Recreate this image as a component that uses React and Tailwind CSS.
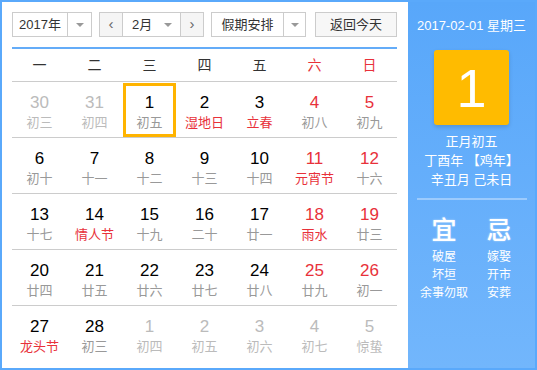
const FONT = "font-['Liberation_Sans','Noto_Sans_CJK_SC',sans-serif]";

const WEEK = ["一", "二", "三", "四", "五", "六", "日"];

// t: 0 normal, 1 dim (other month); red: number red; lr: lunar red; sel: selected
const DAYS = [
  [30, "初三", 1], [31, "初四", 1], [1, "初五", 0, 0, 0, 1], [2, "湿地日", 0, 0, 1], [3, "立春", 0, 0, 1], [4, "初八", 0, 1], [5, "初九", 0, 1],
  [6, "初十"], [7, "十一"], [8, "十二"], [9, "十三"], [10, "十四"], [11, "元宵节", 0, 1, 1], [12, "十六", 0, 1],
  [13, "十七"], [14, "情人节", 0, 0, 1], [15, "十九"], [16, "二十"], [17, "廿一"], [18, "雨水", 0, 1, 1], [19, "廿三", 0, 1],
  [20, "廿四"], [21, "廿五"], [22, "廿六"], [23, "廿七"], [24, "廿八"], [25, "廿九", 0, 1], [26, "初一", 0, 1],
  [27, "龙头节", 0, 0, 1], [28, "初三"], [1, "初四", 1], [2, "初五", 1], [3, "初六", 1], [4, "初七", 1], [5, "惊蛰", 1],
];

function Caret() {
  return <span className="w-0 h-0 border-x-[4px] border-x-transparent border-t-[4px] border-t-[#999]" />;
}

function Select({ label, w, textW }) {
  return (
    <div className={`flex h-[25px] border border-[#ccc] bg-white ${w}`}>
      <div className={`flex items-center justify-center text-[13px] text-[#333] ${textW}`}>{label}</div>
      <div className="flex-1 flex items-center justify-center border-l border-[#ccc]">
        <Caret />
      </div>
    </div>
  );
}

function Cell({ d }) {
  const [n, lunar, dim, red, lred, sel] = d;
  const numColor = dim ? "text-[#bbb]" : red ? "text-[#e8313a]" : "text-black";
  const lunColor = dim ? "text-[#bbb]" : lred ? "text-[#e8313a]" : "text-[#999]";
  return (
    <div className="h-[55px] flex items-center justify-center">
      <div
        className={`w-[53px] h-[54px] pt-[6px] flex flex-col items-center justify-center ${
          sel ? "border-[3px] border-[#ffb400]" : ""
        }`}
      >
        <div className={`text-[17px] leading-[20px] ${numColor}`}>{n}</div>
        <div className={`text-[13px] leading-[18px] mt-[1px] ${lunColor}`}>{lunar}</div>
      </div>
    </div>
  );
}

export default function App() {
  const rows = [0, 1, 2, 3, 4].map((r) => DAYS.slice(r * 7, r * 7 + 7));
  return (
    <div className={`w-[537px] h-[370px] flex border-2 border-[#5aa9fb] bg-white ${FONT}`}>
      {/* calendar */}
      <div className="w-[406px] pl-[10px] pt-[10px]">
        <div className="w-[385px] flex items-center">
          <Select label="2017年" w="w-[80px]" textW="w-[54px]" />
          <div className="ml-[7px] flex h-[25px] w-[105px] border border-[#ccc] bg-white">
            <div className="w-[23px] flex items-center justify-center bg-[#f5f5f5] border-r border-[#ccc] text-[#666] text-[15px]">‹</div>
            <div className="flex-1 flex items-center pl-[9px] pr-[8px] text-[13px] text-[#333]">
              <span className="flex-1">2月</span>
              <Caret />
            </div>
            <div className="w-[23px] flex items-center justify-center bg-[#f5f5f5] border-l border-[#ccc] text-[#666] text-[15px]">›</div>
          </div>
          <div className="ml-[7px]">
            <Select label="假期安排" w="w-[95px]" textW="w-[71px]" />
          </div>
          <button className="ml-auto h-[25px] w-[82px] border border-[#ccc] bg-[#f7f7f7] text-[13px] text-[#333]">
            返回今天
          </button>
        </div>

        <div className="w-[385px] mt-[10px] border-t-2 border-[#64acf8]">
          <div className="grid grid-cols-7 h-[33px] items-center border-b border-[#ccc] text-[14px]">
            {WEEK.map((w, i) => (
              <div key={w} className={`text-center ${i > 4 ? "text-[#e8313a]" : "text-[#333]"}`}>
                {w}
              </div>
            ))}
          </div>
          {rows.map((row, ri) => (
            <div key={ri} className={`grid grid-cols-7 ${ri < 4 ? "border-b border-[#ccc]" : ""}`}>
              {row.map((d, i) => (
                <Cell key={i} d={d} />
              ))}
            </div>
          ))}
        </div>
      </div>

      {/* side panel */}
      <div className="flex-1 bg-gradient-to-b from-[#58a7fa] to-[#72b6fc] text-white flex flex-col items-center">
        <div className="mt-[15px] text-[13px] leading-[18px]">2017-02-01 星期三</div>
        <div className="mt-[15px] w-[75px] h-[75px] rounded-[3px] bg-[#ffbb00] shadow-[0_2px_4px_rgba(0,0,0,0.15)] flex items-center justify-center text-[54px] leading-none">
          1
        </div>
        <div className="mt-[7px] text-[13px] leading-[19px] text-center">
          <div>正月初五</div>
          <div>丁酉年 【鸡年】</div>
          <div>辛丑月 己未日</div>
        </div>
        <div className="mt-[9px] w-[110px] h-[2px] bg-[#9ccbfd]" />
        <div className="mt-[16px] flex w-[110px]">
          <div className="flex-1 flex flex-col items-center">
            <div className="text-[25px] leading-[28px] font-medium [text-shadow:0_0_2px_rgba(255,255,255,0.6)]">宜</div>
            <div className="mt-[4px] text-[12px] leading-[18px] text-center">
              <div>破屋</div>
              <div>坏垣</div>
              <div>余事勿取</div>
            </div>
          </div>
          <div className="flex-1 flex flex-col items-center">
            <div className="text-[25px] leading-[28px] font-medium [text-shadow:0_0_2px_rgba(255,255,255,0.6)]">忌</div>
            <div className="mt-[4px] text-[12px] leading-[18px] text-center">
              <div>嫁娶</div>
              <div>开市</div>
              <div>安葬</div>
            </div>
          </div>
        </div>
      </div>
    </div>
  );
}
